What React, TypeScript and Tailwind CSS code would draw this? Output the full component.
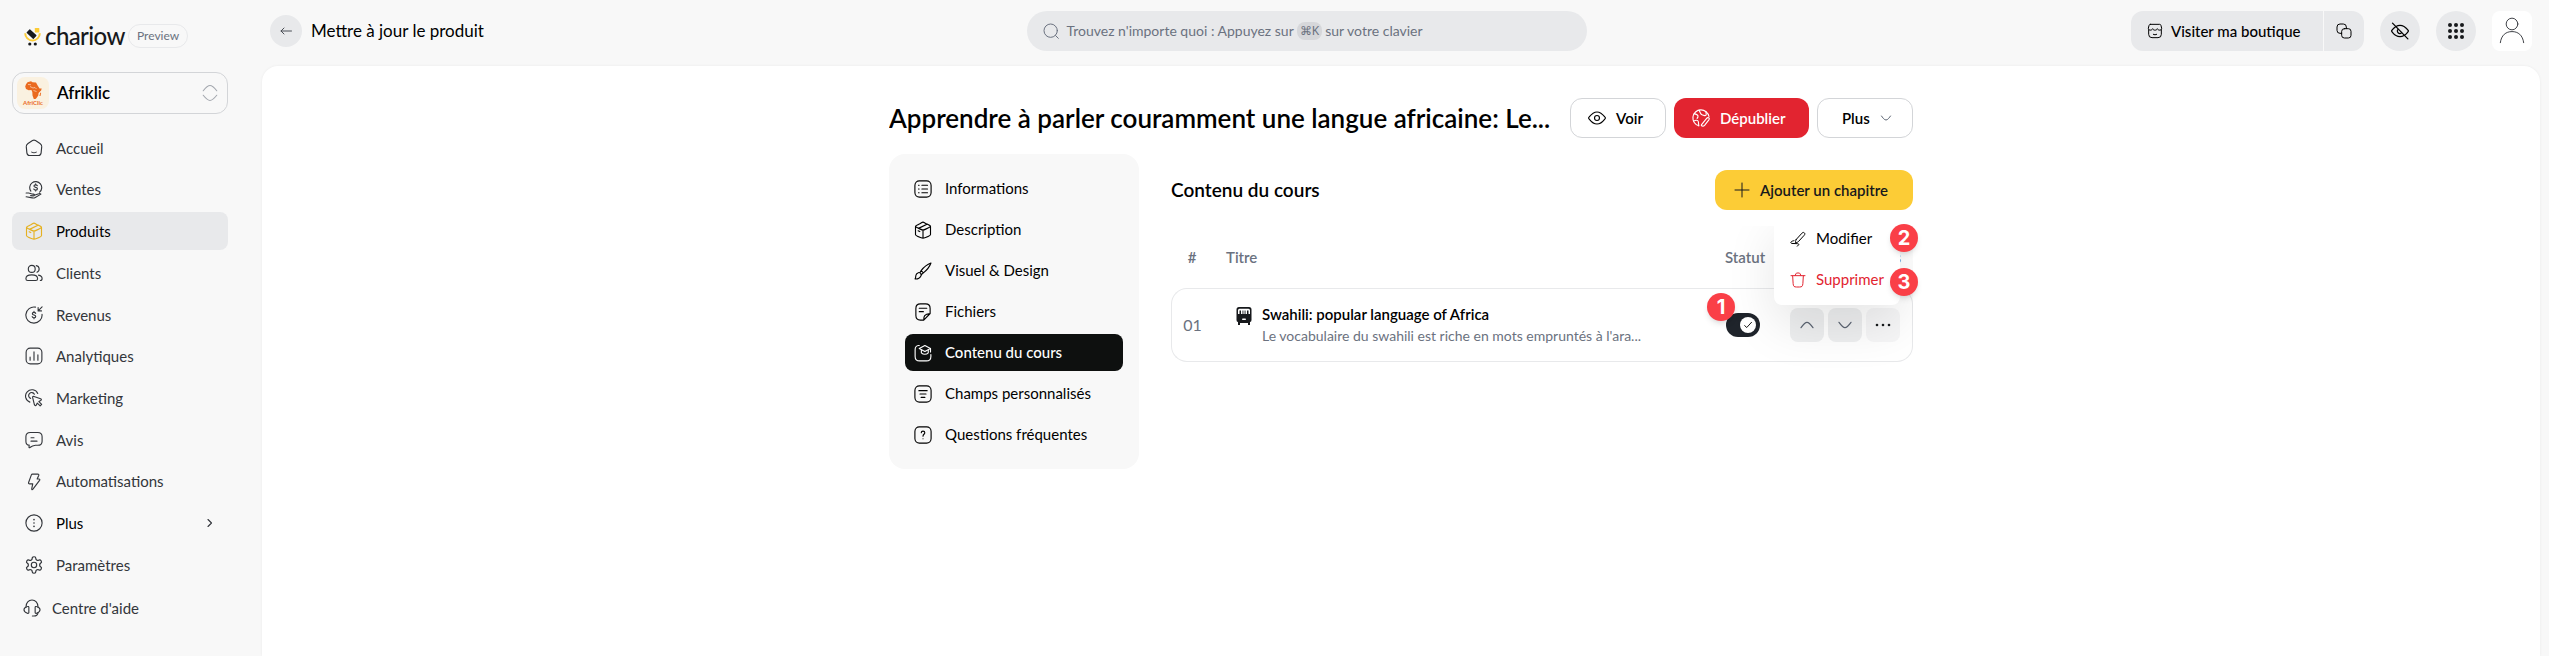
import type { ReactNode } from "react";

type IconProps = { className?: string; children: ReactNode; width?: number };

function Icon({ className = "size-[18px]", children, width = 1.5 }: IconProps) {
  return (
    <svg
      viewBox="0 0 24 24"
      fill="none"
      stroke="currentColor"
      strokeWidth={width}
      strokeLinecap="round"
      strokeLinejoin="round"
      aria-hidden="true"
      className={`shrink-0 ${className}`}
    >
      {children}
    </svg>
  );
}

const icons = {
  home: (
    <>
      <path d="M4 5.900 10 2.100q2-1.200 4 0l6 3.800q2.500 1.600 2.300 4.300l-.8 8.300q-.4 3.500-3.500 3.500H6q-3.100 0-3.500-3.500l-.8-8.300Q1.500 7.500 4 5.900Z" />
      <path d="M9 17.500c1.800 1 4.200 1 6 0" />
    </>
  ),
  sales: (
    <>
      <path d="M7.800 13.500A8 8 0 1 1 19.500 14.900" />
      <path d="M16.500 6.300c-.5-.9-1.300-1.200-2.300-1.200-1.300 0-2.300.6-2.300 1.700 0 2.300 4.700 1.100 4.700 3.500 0 1.200-1.100 1.800-2.400 1.800-1.200 0-2.100-.5-2.500-1.400M14.200 3.900v1.200M14.200 12.100v1.200" />
      <path d="M1.500 16h3.300c1.500 0 2.500.7 4 1.100l2.500.4c1.700.4 1.500 2.400-.5 2.300L7.500 19.500M12.500 19l5.800-2.100c1-.4 2.200-.1 2.900.6l-7.500 4.400c-1.200.8-2.700 1-4 .6L1.500 21" />
    </>
  ),
  box: (
    <>
      <path d="M12 23c-.9 0-1.700-.3-3.400-1C4.200 20.200 2 19.400 2 17.900V7.300M12 23c.9 0 1.700-.3 3.400-1 4.400-1.800 6.600-2.600 6.600-4.100V7.300M12 23V12" />
      <path d="M7.700 10.500 4.600 9C2.900 8.200 2 7.800 2 7.100s.9-1.100 2.600-1.900l3.100-1.500C9.800 2.500 10.900 1.500 12 1.500s2.200 1 4.300 2.100l3.100 1.500c1.700.8 2.600 1.200 2.600 1.900s-.9 1.200-2.600 2l-3.100 1.500C14.200 11.500 13.100 12 12 12s-2.200-.5-4.300-1.500Z" />
      <path d="m5.500 13 2.200 1.100M17.300 4.200 6.700 9.500" />
    </>
  ),
  clients: (
    <>
      <circle cx="9" cy="6.500" r="4.600" />
      <path d="M15 2.200a4.600 4.600 0 0 1 1 8.800M1.200 19.500c0-2.800 3-5 7.800-5s7.800 2.200 7.800 5c0 1.500-.9 2.500-2.400 2.500H3.600c-1.500 0-2.400-1-2.400-2.500ZM18 14.800c2.800.6 4.800 2.200 4.800 4.500 0 1.600-.9 2.700-2.400 2.700" />
    </>
  ),
  revenue: (
    <>
      <path d="M14 1.500A10.800 10.800 0 1 0 22.700 11" />
      <path d="m22.800 1.200-5 5M17.500 2v4.500H22" />
      <path d="M14.200 9.800c-.3-.8-1.100-1.300-2.200-1.300-1.300 0-2.200.7-2.200 1.700 0 2.400 4.500 1.200 4.500 3.700 0 1.100-1 1.800-2.300 1.800-1.200 0-2.100-.6-2.400-1.500M12 7.200v1.300M12 15.700V17" />
    </>
  ),
  analytics: (
    <>
      <rect x="1.500" y="1.500" width="21" height="21" rx="5.500" />
      <path d="M6.800 17.500v-4M12 17.500v-11M17.200 17.500v-7" />
    </>
  ),
  marketing: (
    <>
      <path d="M6.500 17.500A8.500 8.500 0 1 1 17 6M7.500 12.500a4 4 0 1 1 5-5.500" />
      <path d="M10.200 11.500c-.3-1.300.6-2 1.800-1.600l8.800 3c1.400.5 1.400 1.900.2 2.500l-2.500 1.300 3.700 3.800-2 2-3.800-3.700-1.300 2.500c-.6 1.200-2 1.100-2.500-.2Z" />
    </>
  ),
  review: (
    <>
      <path d="M7 2h10q5.800 0 5.800 5.500v6q0 5.500-5.800 5.500h-3c-3 .2-5 1-7.500 3-.9.700-1.400.2-1.200-.8l.3-2.300Q1.200 18.500 1.200 13.500v-6Q1.200 2 7 2Z" />
      <path d="M8 9h4M8 13.500h8" />
    </>
  ),
  bolt: (
    <path d="M8.500 2.500Q8.900 1.500 10 1.500h7q2 0 1.300 1.800L16.200 8h2.300q2 .2.900 1.900L10.600 21.600c-1 1.200-1.900.7-1.600-.7l1.300-6.400H6.200q-2 0-1.400-1.900Z" />
  ),
  more: (
    <>
      <circle cx="12" cy="12" r="10.800" />
      <path d="M12 7.500h.01M12 12h.01M12 16.500h.01" strokeWidth={2.200} />
    </>
  ),
  settings: (
    <>
      <path
        transform="translate(-1.200 -1.200) scale(1.100)"
        d="M12.220 2h-.44a2 2 0 0 0-2 2v.18a2 2 0 0 1-1 1.730l-.43.25a2 2 0 0 1-2 0l-.15-.08a2 2 0 0 0-2.730.73l-.22.38a2 2 0 0 0 .73 2.730l.15.1a2 2 0 0 1 1 1.720v.51a2 2 0 0 1-1 1.740l-.15.09a2 2 0 0 0-.73 2.730l.22.38a2 2 0 0 0 2.730.73l.15-.08a2 2 0 0 1 2 0l.43.25a2 2 0 0 1 1 1.730V20a2 2 0 0 0 2 2h.44a2 2 0 0 0 2-2v-.18a2 2 0 0 1 1-1.730l.43-.25a2 2 0 0 1 2 0l.15.08a2 2 0 0 0 2.730-.73l.22-.39a2 2 0 0 0-.73-2.730l-.15-.08a2 2 0 0 1-1-1.740v-.5a2 2 0 0 1 1-1.740l.15-.09a2 2 0 0 0 .73-2.730l-.22-.38a2 2 0 0 0-2.730-.73l-.15.08a2 2 0 0 1-2 0l-.43-.25a2 2 0 0 1-1-1.730V4a2 2 0 0 0-2-2z"
      />
      <circle cx="12" cy="12" r="3.600" />
    </>
  ),
  headset: (
    <>
      <path d="M4 10.500C4 5 7.500 1.300 12 1.300S20 5 20 10.500M20 18.500c-.5 3-2.500 4.200-5.500 4.200h-2" />
      <path d="M7.800 11v7c0 1-.9 1.400-2 .9C3 18 1.300 17 1.300 14.400S3 11 5.800 10.100c1.100-.4 2-.1 2 .9ZM16.200 11v7c0 1 .9 1.400 2 .9 2.800-.9 4.500-1.900 4.500-4.500s-1.700-3.400-4.500-4.300c-1.100-.4-2-.1-2 .9Z" />
    </>
  ),
  info: (
    <>
      <rect x="1.200" y="1.200" width="21.600" height="21.600" rx="6" />
      <path d="M10.500 7h7.500M10.500 12h7.500M10.500 17h7.500" />
      <path d="M6 7h.8M6 12h.8M6 17h.8" />
    </>
  ),
  brush: (
    <>
      <path d="M9.500 11.500C13 7 18 3 22.600 1.400 21 6 17 11 12.500 14.500L9.500 17M9.500 11.500 8 14M9.500 11.500l3 3" />
      <path d="M5.700 14.200c1.900-.8 4.500 1.500 3.900 3.700C8.800 21 5 23 1.400 22.500c1.200-1.300.7-2.700 1-4.300.3-1.900 1.500-3.300 3.300-4Z" />
    </>
  ),
  file: (
    <>
      <path d="M8.500 1.200h7q6 0 6 6V14l-8.500 8.800H8.500q-6 0-6-6V7.200q0-6 6-6ZM13 22.500c0-5 .5-7.500 8.500-8.500" />
      <path d="M7 7h10M7 11.500h5.500" />
    </>
  ),
  course: (
    <>
      <path d="M7 2H6Q1.500 2.500 1.500 7.500v9q0 6 6 6h9q6 0 6-6V14" />
      <path d="m7 6 7.500-4L22 6l-7.500 4ZM22 6v4.500" />
      <path d="M9.800 8v3.700c2.500 2.600 6.800 2.600 9.200 0V8" />
    </>
  ),
  fields: (
    <>
      <rect x="1.200" y="1.200" width="21.600" height="21.600" rx="6" />
      <path d="M6.500 7.500h11M8 12h8M9.500 16.500h5" />
    </>
  ),
  question: (
    <>
      <rect x="1.200" y="1.200" width="21.600" height="21.600" rx="6" />
      <path d="M9.700 9c0-1.300 1-2.200 2.300-2.200s2.400.9 2.400 2.200c0 2-2.400 2-2.400 4.500M12 17h.01" />
    </>
  ),
  search: (
    <>
      <circle cx="11.500" cy="11.500" r="10" />
      <path d="m18.800 18.800 4.200 4.200" />
    </>
  ),
  arrowLeft: <path d="M23 12H2M8 6l-6 6 6 6" />,
  store: (
    <>
      <path d="M2.500 10v7q0 5 5 5h9q5 0 5-5v-7M5 2h14q1.500 0 2 1.800l1 4c.3 3.500-5.200 4-6.500.7-.9 3-6.100 3-7 0C7.200 11.800 1.700 11.300 2 7.800l1-4Q3.500 2 5 2Z" />
      <path d="M9.500 17c1.500.9 3.500.9 5 0" />
    </>
  ),
  copy: (
    <>
      <rect x="8.500" y="8.500" width="14" height="14" rx="4" />
      <path d="M15.500 8.500V6q0-4.500-4.500-4.500H6Q1.500 1.500 1.500 6v5q0 4.500 4.500 4.500h2.500" />
    </>
  ),
  eye: (
    <>
      <path d="M22.400 10.600c.6.600.8.900.8 1.400s-.2.800-.8 1.400C20.200 16.200 16.500 20 12 20s-8.200-3.800-10.400-6.600C1 12.800.8 12.500.8 12s.2-.8.8-1.400C3.800 7.800 7.500 4 12 4s8.200 3.800 10.400 6.600Z" />
      <circle cx="12" cy="12" r="3.300" />
    </>
  ),
  eyeOff: (
    <>
      <path d="M22.400 10.600c.6.600.8.900.8 1.400s-.2.800-.8 1.400C20.200 16.200 16.500 19.500 12 19.500s-8.200-3.300-10.400-6.100C1 12.800.8 12.500.8 12s.2-.8.8-1.400C3.800 7.800 7.500 4.500 12 4.500s8.200 3.300 10.400 6.100Z" />
      <path d="M14.500 14a3.300 3.300 0 1 1-4.600-4.600M2 1.500l20.500 21" />
    </>
  ),
  globe: (
    <>
      <path d="M9 22.400A10.800 10.800 0 1 1 22.600 10" />
      <path d="M3 6.200 6.500 7.500q2 1 1.500 3L6.800 12.500M2 16l3.500-1q2.500-.3 3 2L9 22.400" />
      <path d="M9.500 1.600 11 5q1 2.500 3 3l3 .8q1.800.2 2-1.500L18.500 3.500" />
      <path d="m12.500 21.200 7-8.700q1.200-1.500 2.700-.7t.3 2.600l-5.500 7q-1.500 1.700-3.500 1.300-1.500-.5-1-1.500Z" />
    </>
  ),
  chevronDown: <path d="M3 8c2 2.800 5.500 8 9 8s7-5.200 9-8" />,
  chevronUp: <path d="M3 16c2-2.800 5.500-8 9-8s7 5.200 9 8" />,
  chevronRight: <path d="m8 5 7 7-7 7" />,
  plus: <path d="M12 1.500v21M1.500 12h21" />,
  pen: (
    <>
      <path d="M9.500 12.500 18 3.200c1.300-1.400 2.500-1.300 3.500-.4s1.100 2.200-.2 3.600L13 15.500c-1 1-1.500 1.300-2.800 1.700l-2 .4c.1-2 .3-4 1.300-5.100Z" />
      <path d="M6 14.500c-2 .3-3.500.9-4.500 2-.7 1-.2 2 1.500 2.200l8 .3c2 .2 2.800.8 1.800 1.800L11 22.800" />
    </>
  ),
  trash: (
    <path d="m20 6-.7 11.500c-.3 3.800-1.300 5-5 5H9.700c-3.700 0-4.700-1.200-5-5L4 6M1.500 5.500h21M7.500 5.500 9 2.500q.4-1 1.500-1h3q1.100 0 1.500 1l1.500 3" />
  ),
  check: <path d="m4 13.500 5 4.500L20.500 5.500" />,
};

const navItems: { label: string; icon: ReactNode; active?: boolean; more?: boolean }[] = [
  { label: "Accueil", icon: icons.home },
  { label: "Ventes", icon: icons.sales },
  { label: "Produits", icon: icons.box, active: true },
  { label: "Clients", icon: icons.clients },
  { label: "Revenus", icon: icons.revenue },
  { label: "Analytiques", icon: icons.analytics },
  { label: "Marketing", icon: icons.marketing },
  { label: "Avis", icon: icons.review },
  { label: "Automatisations", icon: icons.bolt },
  { label: "Plus", icon: icons.more, more: true },
  { label: "Paramètres", icon: icons.settings },
];

const tabs: { label: string; icon: ReactNode; active?: boolean }[] = [
  { label: "Informations", icon: icons.info },
  { label: "Description", icon: icons.box },
  { label: "Visuel & Design", icon: icons.brush },
  { label: "Fichiers", icon: icons.file },
  { label: "Contenu du cours", icon: icons.course, active: true },
  { label: "Champs personnalisés", icon: icons.fields },
  { label: "Questions fréquentes", icon: icons.question },
];

function LogoMark() {
  return (
    <svg viewBox="0 0 17 20" className="h-5 w-[17px] shrink-0" aria-hidden="true">
      <path d="M1.200 7.200a7.300 7.300 0 0 0 14.600 0" fill="none" stroke="#fccc36" strokeWidth="2" />
      <rect x="10.800" y="2" width="4.500" height="4.500" rx=".6" fill="#fccc36" />
      <rect x="2.800" y="5.500" width="9.500" height="5" rx=".6" fill="#17191c" transform="rotate(43 7.500 8)" />
      <circle cx="5.800" cy="18" r="1.600" fill="#17191c" />
      <circle cx="11.300" cy="18" r="1.600" fill="#17191c" />
    </svg>
  );
}

function ShopLogo() {
  return (
    <span className="flex size-8 shrink-0 flex-col items-center justify-center rounded-lg bg-[#faf1e0]">
      <svg viewBox="0 0 17 18" className="h-[18px] w-[17px]" aria-hidden="true" fill="#ea6a1f">
        <path d="M2.500 1.200 6 .3l1.500.9 3.500.2 1.800 3.300 1.700 2.800 2.200-.1-.6 2-2.500 2.500-.3 2.700-1.800 2.500-1 .9H8.800L7.500 14.500 7.300 11l-.9-2-2.700.3L1 8 .2 5.500l.8-2.300Z" />
        <path d="m15.300 11.500.8.600-.6 2.800-1.100.2Z" />
        <path d="m5 5.500 3 1.500 2-.5 1.500 1.500M8.500 9.500l3 1M3 3.500l3 .2" fill="none" stroke="#faf1e0" strokeWidth=".6" />
      </svg>
      <span className="text-[6px] leading-[7px] font-bold text-[#ea6a1f]">AfriClic</span>
    </span>
  );
}

function Sidebar() {
  return (
    <aside className="flex w-[262px] shrink-0 flex-col px-3 pt-6">
      <div className="flex h-6 items-center pl-3">
        <LogoMark />
        <span className="ml-1 w-[79px] text-2xl leading-6 font-medium tracking-tight text-[#17191c]">chariow</span>
        <span className="ml-1 flex h-6 items-center rounded-full border border-[#e8e9eb] px-2 text-xs text-[#6b7280]">Preview</span>
      </div>
      <button type="button" className="mt-6 flex h-[42px] w-[216px] items-center rounded-xl border border-[#d3d5d8] pr-2 pl-1">
        <ShopLogo />
        <span className="ml-2 flex-1 text-left text-[17px] font-semibold text-black">Afriklic</span>
        <Icon className="size-[18px] text-[#a3a7ae]">
          <path d="M3 9c2-2.500 6-7 9-7s7 4.500 9 7M3 15c2 2.500 6 7 9 7s7-4.500 9-7" />
        </Icon>
      </button>
      <nav className="mt-[15px] w-[216px]" aria-label="Navigation principale">
        <ul className="flex h-[455px] flex-col justify-between">
          {navItems.map((item) => (
            <li key={item.label}>
              <a
                href="#"
                className={`flex h-[38px] items-center rounded-lg pr-3 pl-[13px] text-[15px] ${
                  item.active ? "bg-[#e8e9eb] text-black" : "text-[#33363b]"
                }`}
              >
                <Icon className={item.active ? "size-[18px] text-[#e5b120]" : "size-[18px]"}>{item.icon}</Icon>
                <span className={`ml-[13px] flex-1 ${item.more ? "text-black" : ""}`}>{item.label}</span>
                {item.more && <Icon className="size-3" width={2.2}>{icons.chevronRight}</Icon>}
              </a>
            </li>
          ))}
        </ul>
        <a href="#" className="mt-[5px] flex h-[38px] items-center pl-[11px] text-[15px] text-[#33363b]">
          <Icon>{icons.headset}</Icon>
          <span className="ml-[11px]">Centre d'aide</span>
        </a>
      </nav>
    </aside>
  );
}

function TopBar() {
  return (
    <header className="flex h-[66px] items-center justify-between pr-[17px] pb-1 pl-2">
      <div className="flex w-[212px] items-center gap-[9px]">
        <button type="button" aria-label="Retour" className="flex size-8 shrink-0 items-center justify-center rounded-full bg-[#e8e9eb] text-[#4b4f56]">
          <Icon className="size-3" width={2}>{icons.arrowLeft}</Icon>
        </button>
        <h1 className="text-[17px] whitespace-nowrap text-black">Mettre à jour le produit</h1>
      </div>
      <button type="button" className="flex h-10 w-[560px] items-center rounded-full bg-[#e8e9eb] pl-4 text-sm text-[#6b7280]">
        <Icon className="size-4">{icons.search}</Icon>
        <span className="ml-2">Trouvez n'importe quoi : Appuyez sur</span>
        <kbd className="mx-[3px] rounded-lg bg-[#d6d7da] px-[3px] font-sans text-xs leading-[18px]">⌘K</kbd>
        <span>sur votre clavier</span>
      </button>
      <div className="flex items-center gap-4">
        <div className="flex gap-px">
          <a href="#" className="flex h-10 w-48 items-center rounded-l-xl bg-[#e8e9eb] pl-4 text-[15px] font-medium text-black">
            <Icon className="size-4">{icons.store}</Icon>
            <span className="ml-2">Visiter ma boutique</span>
          </a>
          <button type="button" aria-label="Copier le lien" className="flex size-10 items-center justify-center rounded-r-xl bg-[#e8e9eb]">
            <Icon className="size-4">{icons.copy}</Icon>
          </button>
        </div>
        <button type="button" aria-label="Masquer" className="flex size-10 items-center justify-center rounded-full bg-[#e8e9eb]">
          <Icon className="size-[18px]" width={1.7}>{icons.eyeOff}</Icon>
        </button>
        <button type="button" aria-label="Applications" className="flex size-10 items-center justify-center rounded-full bg-[#e8e9eb]">
          <svg viewBox="0 0 18 18" className="size-[18px]" fill="#17191c" aria-hidden="true">
            {[3, 9, 15].map((y) => [3, 9, 15].map((x) => <circle key={`${x}-${y}`} cx={x} cy={y} r="2" />))}
          </svg>
        </button>
        <button type="button" aria-label="Compte" className="flex size-10 items-center justify-center rounded-lg bg-white text-[#33363b]">
          <Icon className="size-7" width={0.8}>
            <circle cx="12" cy="6" r="5" />
            <path d="M2 22c.8-6.500 4.800-9.500 10-9.500s9.200 3 10 9.500" />
          </Icon>
        </button>
      </div>
    </header>
  );
}

function Marker({ value, place }: { value: string; place: string }) {
  return (
    <span className={`absolute flex size-7 items-center justify-center rounded-full bg-[#fa3f47] font-['Inter',sans-serif] text-xl leading-7 font-bold text-white shadow-md ${place}`}>
      {value}
    </span>
  );
}

const outlineButton = "flex h-10 items-center rounded-xl border border-[#d3d5d8] bg-white text-[15px] font-semibold text-black";
const rowButton = "flex size-[34px] items-center justify-center rounded-lg bg-[#eeeff0] text-[#5b6472]";

function ChapterTable() {
  return (
    <div className="relative mt-4">
      <div className="relative overflow-hidden pb-3">
        <table className="w-full border-separate border-spacing-0 text-left">
          <thead>
            <tr className="h-[62px] text-[15px] text-[#6b7280]">
              <th scope="col" className="w-[42px] text-center font-semibold">#</th>
              <th scope="col" className="pl-[13px] font-semibold">Titre</th>
              <th scope="col" className="w-[61px] pl-3 font-semibold">Statut</th>
              <th scope="col" className="w-[139px] pr-3 text-right font-semibold">Actions</th>
            </tr>
          </thead>
          <tbody>
            <tr className="h-[74px]">
              <td className="rounded-l-2xl border-y border-l border-[#e8e9eb] text-center text-base text-[#6b7280]">01</td>
              <td className="border-y border-[#e8e9eb] pl-[23px]">
                <div className="flex gap-[10px]">
                  <svg viewBox="0 0 16 18" className="mt-1 h-[18px] w-4 shrink-0" aria-hidden="true">
                    <path d="M3 0h10q2.500 0 2.500 2.500V13q0 2-1.500 2v3h-2v-2H4v2H2v-3Q.5 15 .5 13V2.500Q.5 0 3 0Z" fill="#17191c" />
                    <path d="M2 7V3.200Q2 1.700 3.500 1.700h9Q14 1.700 14 3.200V7h-1.500V3.500H11V7H9.500V3.500H8.600V7H7.400V3.500H6.500V7H5V3.500H3.500V7Z" fill="#fff" />
                    <rect x="6" y="11.500" width="4" height="1.600" rx=".8" fill="#fff" />
                  </svg>
                  <div>
                    <p className="text-[15px] leading-[22px] font-semibold text-black">Swahili: popular language of Africa</p>
                    <p className="text-sm leading-[22px] text-[#6b7280]">Le vocabulaire du swahili est riche en mots empruntés à l'ara...</p>
                  </div>
                </div>
              </td>
              <td className="border-y border-[#e8e9eb] pl-[13px]">
                <label className="relative flex h-6 w-[34px] items-center justify-end rounded-full bg-[#1f242b] pr-1">
                  <input type="checkbox" role="switch" defaultChecked aria-label="Statut du chapitre" className="absolute inset-0 cursor-pointer appearance-none rounded-full" />
                  <span className="flex size-4 items-center justify-center rounded-full bg-white text-black">
                    <Icon className="size-[10px]" width={2.2}>{icons.check}</Icon>
                  </span>
                </label>
              </td>
              <td className="rounded-r-2xl border-y border-r border-[#e8e9eb] pr-3">
                <div className="flex justify-end gap-1">
                  <button type="button" aria-label="Monter" className={rowButton}>
                    <Icon className="size-4" width={1.8}>{icons.chevronUp}</Icon>
                  </button>
                  <button type="button" aria-label="Descendre" className={rowButton}>
                    <Icon className="size-4" width={1.8}>{icons.chevronDown}</Icon>
                  </button>
                  <button type="button" aria-label="Options" className="flex size-[34px] items-center justify-center rounded-lg bg-[#f6f6f7]">
                    <svg viewBox="0 0 16 16" className="size-4" fill="#17191c" aria-hidden="true">
                      <circle cx="2" cy="8" r="1.300" />
                      <circle cx="8" cy="8" r="1.300" />
                      <circle cx="14" cy="8" r="1.300" />
                    </svg>
                  </button>
                </div>
              </td>
            </tr>
          </tbody>
        </table>
        <ul role="menu" className="absolute -top-3 right-[13px] w-[126px] rounded-lg bg-white pt-1 pb-[5px] shadow-[0_20px_50px_rgba(0,0,0,0.10)]">
          <li role="none">
            <button type="button" role="menuitem" className="flex h-[41px] w-full items-center gap-[10px] pl-4 text-[15px] text-black">
              <Icon className="size-4">{icons.pen}</Icon>
              Modifier
            </button>
          </li>
          <li role="none">
            <button type="button" role="menuitem" className="flex h-[41px] w-full items-center gap-[10px] pl-4 text-[15px] text-[#e22430]">
              <Icon className="size-4">{icons.trash}</Icon>
              Supprimer
            </button>
          </li>
        </ul>
      </div>
      <Marker value="1" place="top-[67px] right-[178px]" />
      <Marker value="2" place="-top-[2px] -right-[5px]" />
      <Marker value="3" place="top-[42px] -right-[5px]" />
    </div>
  );
}

export default function App() {
  return (
    <div className="flex min-h-screen bg-[#f8f8f8] font-['Lato','Noto_Sans',sans-serif]">
      <Sidebar />
      <div className="flex min-w-0 flex-1 flex-col">
        <TopBar />
        <main className="mr-[9px] flex-1 rounded-t-2xl bg-white px-4 pt-8 shadow-[0_0_3px_rgba(0,0,0,0.06)]">
          <div className="mx-auto max-w-5xl">
            <div className="flex items-center gap-2">
              <h2 className="min-w-0 flex-1 truncate text-[26px] leading-10 font-semibold text-black">Apprendre à parler couramment une langue africaine: Le...</h2>
              <button type="button" className={`${outlineButton} w-24 gap-[10px] pl-[17px]`}>
                <Icon>{icons.eye}</Icon>
                Voir
              </button>
              <button type="button" className="flex h-10 w-[135px] items-center gap-[10px] rounded-xl bg-[#e22430] pl-[18px] text-[15px] font-semibold text-white">
                <Icon>{icons.globe}</Icon>
                Dépublier
              </button>
              <button type="button" className={`${outlineButton} w-24 justify-between pr-5 pl-6`}>
                Plus
                <Icon className="size-3 text-[#5b6472]" width={2}>{icons.chevronDown}</Icon>
              </button>
            </div>
            <div className="mt-4 flex items-start gap-8">
              <nav aria-label="Sections du produit" className="w-[250px] shrink-0 rounded-2xl bg-[#f8f8f8] p-4">
                <ul className="flex flex-col gap-1">
                  {tabs.map((tab) => (
                    <li key={tab.label}>
                      <a
                        href="#"
                        className={`flex h-[37px] items-center gap-[13px] rounded-lg pl-[9px] text-[15px] ${
                          tab.active ? "bg-[#0e100f] font-medium text-white" : "text-black"
                        }`}
                      >
                        <Icon>{tab.icon}</Icon>
                        {tab.label}
                      </a>
                    </li>
                  ))}
                </ul>
              </nav>
              <section className="min-w-0 flex-1 pt-4">
                <div className="flex h-10 items-center justify-between">
                  <h3 className="text-[19px] font-semibold text-black">Contenu du cours</h3>
                  <button type="button" className="flex h-10 w-[198px] items-center gap-[10px] rounded-xl bg-[#fccc36] pl-[19px] text-[15px] font-semibold text-[#17191c]">
                    <Icon className="size-4">{icons.plus}</Icon>
                    Ajouter un chapitre
                  </button>
                </div>
                <ChapterTable />
              </section>
            </div>
          </div>
        </main>
      </div>
    </div>
  );
}
